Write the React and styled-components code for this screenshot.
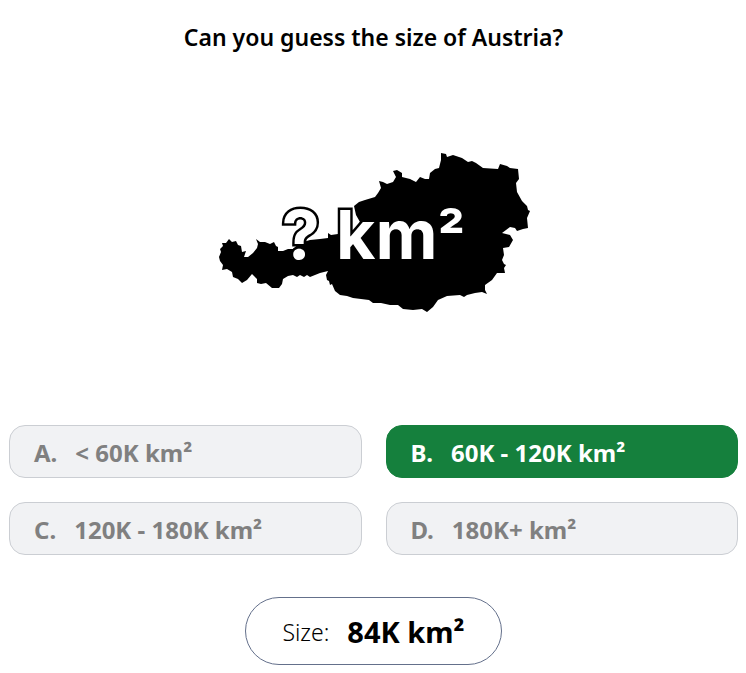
import React from 'react';
import styled, { createGlobalStyle } from 'styled-components';

const options = [
    { letter: 'A', text: '< 60K km²' },
    { letter: 'B', text: '60K - 120K km²', correct: true },
    { letter: 'C', text: '120K - 180K km²' },
    { letter: 'D', text: '180K+ km²' },
];

function App() {
    return (
        <>
            <GlobalStyle />
            <Quiz>
                <Question>Can you guess the size of Austria?</Question>
                <MapArea>
                    <Country viewBox="218 152 312 161" aria-hidden="true">
                        <path d="M219 257L221 252L220 249L223 246L222 243L226 243L229 239L232 242L236 241L238 245L241 246L242 252L246 251L244 257L248 257L253 253L257 248L258 244L256 239L260 242L265 242L270 244L274 242L276 246L278 247L278 251L283 251L288 249L293 249L300 243L310 240L320 239L328 238L328 233L331 235L338 234L354 231L360 222L356 215L354 206L359 202L365 200L375 197L378 193L381 188L379 181L383 182L387 184L393 182L396 177L393 171L397 170L402 173L402 177L410 179L416 182L420 177L425 179L429 179L430 173L435 169L439 168L441 160L441 153L446 154L447 157L453 155L462 158L468 162L472 161L476 163L483 168L498 169L500 164L507 166L510 168L518 169L519 179L516 183L517 192L522 201L527 206L528 210L530 211L527 218L528 228L523 229L517 231L515 228L510 227L506 230L502 233L510 235L513 240L509 247L503 248L504 255L502 260L504 264L506 265L504 268L505 273L497 273L492 280L485 285L485 290L487 294L482 292L475 293L467 295L464 297L460 295L447 296L438 300L433 307L427 312L422 309L413 310L403 309L398 305L390 305L381 303L373 303L369 300L353 298L347 296L340 295L335 291L332 284L330 285L329 281L327 280L326 275L328 271L320 273L310 277L307 275L304 277L300 275L297 277L293 275L288 276L283 279L282 284L279 288L272 288L266 283L261 284L257 283L257 279L252 274L247 280L242 283L238 279L233 277L232 272L227 269L222 270L223 265L220 261Z" />
                    </Country>
                    <MapLabel>
                        <span>? km<Power>²</Power></span>
                    </MapLabel>
                </MapArea>
                <Options>
                    {options.map(({ letter, text, correct }) => (
                        <Option key={letter} type="button" $correct={correct}>
                            <span>{letter}.</span>
                            <span>{text}</span>
                        </Option>
                    ))}
                </Options>
                <Result>
                    <ResultLabel>Size:</ResultLabel>
                    <ResultValue>84K km²</ResultValue>
                </Result>
            </Quiz>
        </>
    );
}

const GlobalStyle = createGlobalStyle`
    * {
        box-sizing: border-box;
    }
    body {
        margin: 0;
        background-color: white;
        color: black;
        font-family: 'Segoe UI', 'Noto Sans', sans-serif;
    }
`;

const Quiz = styled.main`
    display: flex;
    flex-direction: column;
    align-items: center;
    width: 100%;
    padding: 21px 8px 8px 9px;
`;

const Question = styled.h1`
    margin: 0;
    font-size: 23px;
    line-height: 32px;
    font-weight: 600;
    text-align: center;
`;

const MapArea = styled.div`
    position: relative;
    display: flex;
    align-items: center;
    justify-content: center;
    width: 100%;
    padding: 99px 0 112px;
`;

const Country = styled.svg`
    display: block;
    width: 100%;
    max-width: 312px;
    fill: black;
`;

const MapLabel = styled.div`
    position: absolute;
    inset: 0;
    display: flex;
    align-items: center;
    justify-content: center;
    padding-bottom: 8px;
    color: white;
    font-family: Inter, sans-serif;
    font-size: 68px;
    line-height: 72px;
    font-weight: 700;
    -webkit-text-stroke: 5px black;
    paint-order: stroke fill;
`;

const Power = styled.span`
    font-size: 60px;
`;

const Options = styled.div`
    display: grid;
    grid-template-columns: 1fr 1fr;
    gap: 24px;
    width: 100%;
`;

const Option = styled.button`
    display: flex;
    align-items: center;
    gap: 18px;
    padding: 9px 24px 7px;
    border: 1px solid ${({ $correct }) => ($correct ? '#15803d' : '#cbced3')};
    border-radius: 16px;
    background-color: ${({ $correct }) => ($correct ? '#15803d' : '#f1f2f4')};
    color: ${({ $correct }) => ($correct ? 'white' : '#808080')};
    font-family: inherit;
    font-size: 24px;
    line-height: 35px;
    font-weight: 700;
    text-align: left;
    cursor: pointer;
`;

const Result = styled.div`
    display: flex;
    align-items: center;
    gap: 18px;
    margin-top: 42px;
    padding: 13px 36px 11px;
    border: 1px solid #64708b;
    border-radius: 34px;
    line-height: 42px;
`;

const ResultLabel = styled.span`
    font-size: 23px;
    font-weight: 300;
`;

const ResultValue = styled.strong`
    font-size: 29px;
    font-weight: 700;
`;

export default App;
